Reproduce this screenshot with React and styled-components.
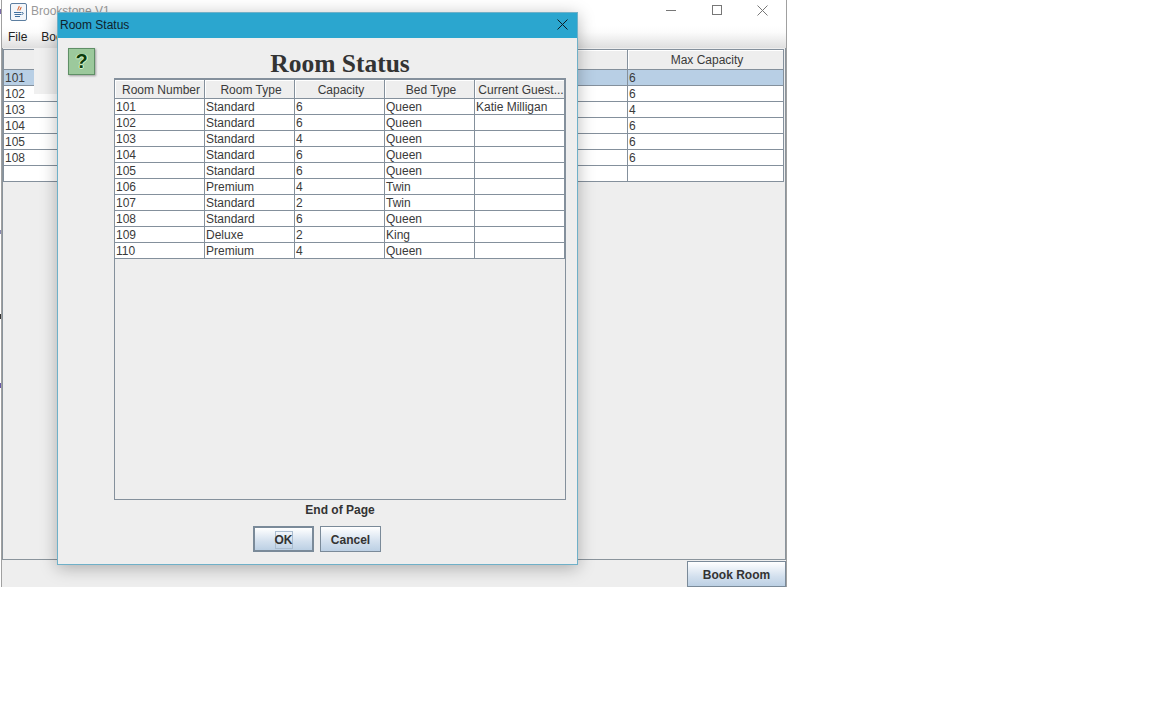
import React from 'react';
import styled, { createGlobalStyle } from 'styled-components';

const Global = createGlobalStyle`
  html, body { margin: 0; padding: 0; background: #fff; }
  body { font-family: "Liberation Sans", Arial, sans-serif; font-size: 12px; color: #333; }
`;

const Page = styled.div`
  position: relative;
  width: 1152px;
  height: 720px;
  overflow: hidden;
  padding-left: 1px;
  box-sizing: border-box;
`;

const Win = styled.div`
  position: relative;
  width: 786px;
  height: 587px;
  overflow: hidden;
  display: flex;
  flex-direction: column;
  background: #eeeeee;
  border-left: 1px solid #a0a0a0;
  border-right: 1px solid #a0a0a0;
  box-sizing: border-box;
`;

const TitleBar = styled.div`
  height: 26px;
  flex: none;
  display: flex;
  align-items: center;
  padding: 0 1px 0 8px;
  background: #fff;
  gap: 4px;
`;

const AppTitle = styled.span`
  flex: 1;
  font-size: 12px;
  color: #9a9a9a;
  margin-top: -4px;
`;

const WinControls = styled.div`
  display: flex;
  align-items: center;
  margin-top: -6px;
`;

const WinControl = styled.span`
  width: 45.5px;
  height: 20px;
  display: flex;
  align-items: center;
  justify-content: center;
`;

const MenuBar = styled.div`
  height: 22px;
  flex: none;
  display: flex;
  align-items: center;
  gap: 14px;
  padding: 0 6px;
  background: linear-gradient(#ffffff 0%, #fbfbfb 30%, #dfdfdf 100%);
  font-size: 12px;
  color: #222;
`;

const Content = styled.div`
  flex: none;
  height: 512px;
  padding: 1px 0 0 0;
  border: 1px solid #8a949c;
  border-top: none;
  box-sizing: border-box;
  background: #eeeeee;
`;

const Footer = styled.div`
  flex: 1;
  display: flex;
  justify-content: flex-end;
  align-items: flex-end;
  background: #eeeeee;
`;

const GridTable = styled.table`
  border-collapse: collapse;
  table-layout: fixed;
  width: ${p => p.$w}px;
  margin-left: ${p => p.$ml || 0}px;
  background: #fff;
  font-size: 12px;
  color: #3a3a3a;
`;

const HeadCell = styled.th`
  height: ${p => p.$h}px;
  padding: 1px 0 0 3px;
  box-sizing: border-box;
  background: #eeeeee;
  border: 1px solid #84909c;
  font-weight: 400;
  text-align: center;
  white-space: nowrap;
  overflow: hidden;
  box-shadow: inset 1px 1px 0 #fff;
`;

const Cell = styled.td`
  height: 16px;
  line-height: 14px;
  padding: 0 1px;
  box-sizing: border-box;
  border: 1px solid #84909c;
  background: ${p => (p.$sel ? '#b8cfe5' : '#fff')};
  white-space: nowrap;
  overflow: hidden;
`;

const Ghost = styled.div`
  position: absolute;
  left: 32px;
  top: 48px;
  width: 30px;
  height: 46px;
  background: #f0f0f0;
`;

const HeadBlank = styled.div`
  position: absolute;
  left: 2px;
  top: 50px;
  width: 30px;
  height: 19px;
  background: #eeeeee;
`;

const Dialog = styled.div`
  position: absolute;
  left: 55px;
  top: 12px;
  width: 521px;
  height: 553px;
  box-sizing: border-box;
  border: 1px solid #6fb0c8;
  background: #eeeeee;
  box-shadow: 0 3px 16px rgba(0, 0, 0, 0.28);
  display: flex;
  flex-direction: column;
`;

const DialogBar = styled.div`
  height: 25px;
  flex: none;
  background: #2ba6cf;
  display: flex;
  align-items: center;
  justify-content: space-between;
  padding: 0 9px 2px 2px;
  box-sizing: border-box;
  font-size: 12px;
  color: #10222c;
`;

const DialogBody = styled.div`
  flex: 1;
  display: flex;
  padding: 10px 11px 12px 10px;
  gap: 19px;
  min-height: 0;
`;

const QuestionBadge = styled.div`
  width: 27px;
  height: 27px;
  flex: none;
  box-sizing: border-box;
  background: #9cc99c;
  border: 1px solid #5f8f66;
  box-shadow: 1px 1px 2px rgba(0, 0, 0, 0.35);
  display: flex;
  align-items: center;
  justify-content: center;
  color: #0c3d0c;
  font-weight: 700;
  font-size: 20px;
  text-shadow: 1px 0 0 #d6f5c8, -1px 0 0 #d6f5c8, 0 1px 0 #d6f5c8;
`;

const DialogMain = styled.div`
  width: 452px;
  display: flex;
  flex-direction: column;
  align-items: center;
`;

const BigTitle = styled.h1`
  margin: 0;
  height: 30px;
  line-height: 32px;
  font-family: "Liberation Serif", "Times New Roman", serif;
  font-size: 25.5px;
  font-weight: 700;
  color: #333;
`;

const ScrollPane = styled.div`
  width: 452px;
  height: 422px;
  flex: none;
  box-sizing: border-box;
  border: 1px solid #84909c;
  background: #eeeeee;
`;

const EndNote = styled.div`
  margin-top: 1px;
  height: 18px;
  line-height: 18px;
  font-weight: 700;
  color: #333;
`;

const Buttons = styled.div`
  margin: 7px 46px 0 0;
  display: flex;
  gap: 6px;
`;

const Btn = styled.button`
  width: ${p => p.$w}px;
  height: 26px;
  padding: 1px 0 0;
  box-sizing: border-box;
  font-family: "Liberation Sans", Arial, sans-serif;
  font-size: 12px;
  font-weight: 700;
  color: #333;
  background: linear-gradient(#ffffff, #d3e0ee 60%, #bcd0e4);
  border: ${p => (p.$default ? '2px' : '1px')} solid #7a8a99;
`;

const FocusLabel = styled.span`
  display: inline-flex;
  align-items: center;
  justify-content: center;
  width: 18px;
  height: 18px;
  box-sizing: border-box;
  border: 1px solid #a9bccf;
`;

const EdgeMark = styled.i`
  position: absolute;
  left: 0;
  top: ${p => p.$y}px;
  width: 2px;
  height: ${p => p.$h}px;
  background: ${p => p.$c};
`;

const JavaIcon = () => (
  <svg width="17" height="18" viewBox="0 0 17 18" style={{ marginTop: -3 }}>
    <rect x="0.5" y="0.5" width="16" height="17" rx="1.5" fill="#f3f6fa" stroke="#5c7ea0" />
    <path d="M9 3c1 1.5-2 2.5-1 4.5M11 4c.5 1-1.5 2-1 3.5" fill="none" stroke="#d8622a" strokeWidth="1.1" />
    <path d="M4 9.5h7.5M4.5 11.5h6.5M5 13.5h5M12 9.5c2 0 1.5 2-.5 2" fill="none" stroke="#3f6f9e" strokeWidth="1" />
  </svg>
);

const Minus = () => (
  <svg width="12" height="12" viewBox="0 0 12 12"><path d="M1 6.5h10" stroke="#777" fill="none" /></svg>
);
const Square = () => (
  <svg width="12" height="12" viewBox="0 0 12 12"><rect x="1.5" y="1.5" width="9" height="9" stroke="#777" fill="none" /></svg>
);
const Cross = ({ c = '#777', s = 11 }) => (
  <svg width={s} height={s} viewBox="0 0 11 11"><path d="M.5.5l10 10M10.5.5l-10 10" stroke={c} fill="none" /></svg>
);

const backCols = ['Room Number', 'Room Type', 'Bed Type', 'Max Beds', 'Max Capacity'];
const backRows = [
  ['101', 'Standard', 'Queen', '2', '6'],
  ['102', 'Standard', 'Queen', '2', '6'],
  ['103', 'Standard', 'Queen', '2', '4'],
  ['104', 'Standard', 'Queen', '2', '6'],
  ['105', 'Standard', 'Queen', '2', '6'],
  ['108', 'Standard', 'Queen', '2', '6'],
  ['', '', '', '', ''],
];

const dlgCols = ['Room Number', 'Room Type', 'Capacity', 'Bed Type', 'Current Guest...'];
const dlgRows = [
  ['101', 'Standard', '6', 'Queen', 'Katie Milligan'],
  ['102', 'Standard', '6', 'Queen', ''],
  ['103', 'Standard', '4', 'Queen', ''],
  ['104', 'Standard', '6', 'Queen', ''],
  ['105', 'Standard', '6', 'Queen', ''],
  ['106', 'Premium', '4', 'Twin', ''],
  ['107', 'Standard', '2', 'Twin', ''],
  ['108', 'Standard', '6', 'Queen', ''],
  ['109', 'Deluxe', '2', 'King', ''],
  ['110', 'Premium', '4', 'Queen', ''],
];

export default function App() {
  return (
    <Page>
      <Global />
      <EdgeMark $y={9} $h={5} $c="#7a6aa8" />
      <EdgeMark $y={230} $h={4} $c="#8a8ab0" />
      <EdgeMark $y={314} $h={5} $c="#333" />
      <EdgeMark $y={383} $h={5} $c="#6a5aa8" />
      <Win>
        <TitleBar>
          <JavaIcon />
          <AppTitle>Brookstone V1</AppTitle>
          <WinControls>
            <WinControl><Minus /></WinControl>
            <WinControl><Square /></WinControl>
            <WinControl><Cross /></WinControl>
          </WinControls>
        </TitleBar>
        <MenuBar>
          <span>File</span>
          <span>Book</span>
        </MenuBar>
        <Content>
          <GridTable $w={781}>
            <thead>
              <tr>
                {backCols.map(c => <HeadCell key={c} $h={20}>{c}</HeadCell>)}
              </tr>
            </thead>
            <tbody>
              {backRows.map((r, i) => (
                <tr key={i}>
                  {r.map((v, j) => <Cell key={j} $sel={i === 0}>{v}</Cell>)}
                </tr>
              ))}
            </tbody>
          </GridTable>
        </Content>
        <Footer>
          <Btn $w={99}>Book Room</Btn>
        </Footer>
        <HeadBlank />
        <Ghost />
        <Dialog>
          <DialogBar>
            <span>Room Status</span>
            <Cross c="#0d1b22" s={11} />
          </DialogBar>
          <DialogBody>
            <QuestionBadge>?</QuestionBadge>
            <DialogMain>
              <BigTitle>Room Status</BigTitle>
              <ScrollPane>
                <GridTable $w={451} $ml={-1}>
                  <thead>
                    <tr>
                      {dlgCols.map(c => <HeadCell key={c} $h={19}>{c}</HeadCell>)}
                    </tr>
                  </thead>
                  <tbody>
                    {dlgRows.map((r, i) => (
                      <tr key={i}>
                        {r.map((v, j) => <Cell key={j}>{v}</Cell>)}
                      </tr>
                    ))}
                  </tbody>
                </GridTable>
              </ScrollPane>
              <EndNote>End of Page</EndNote>
              <Buttons>
                <Btn $w={61} $default><FocusLabel>OK</FocusLabel></Btn>
                <Btn $w={61}>Cancel</Btn>
              </Buttons>
            </DialogMain>
          </DialogBody>
        </Dialog>
      </Win>
    </Page>
  );
}
